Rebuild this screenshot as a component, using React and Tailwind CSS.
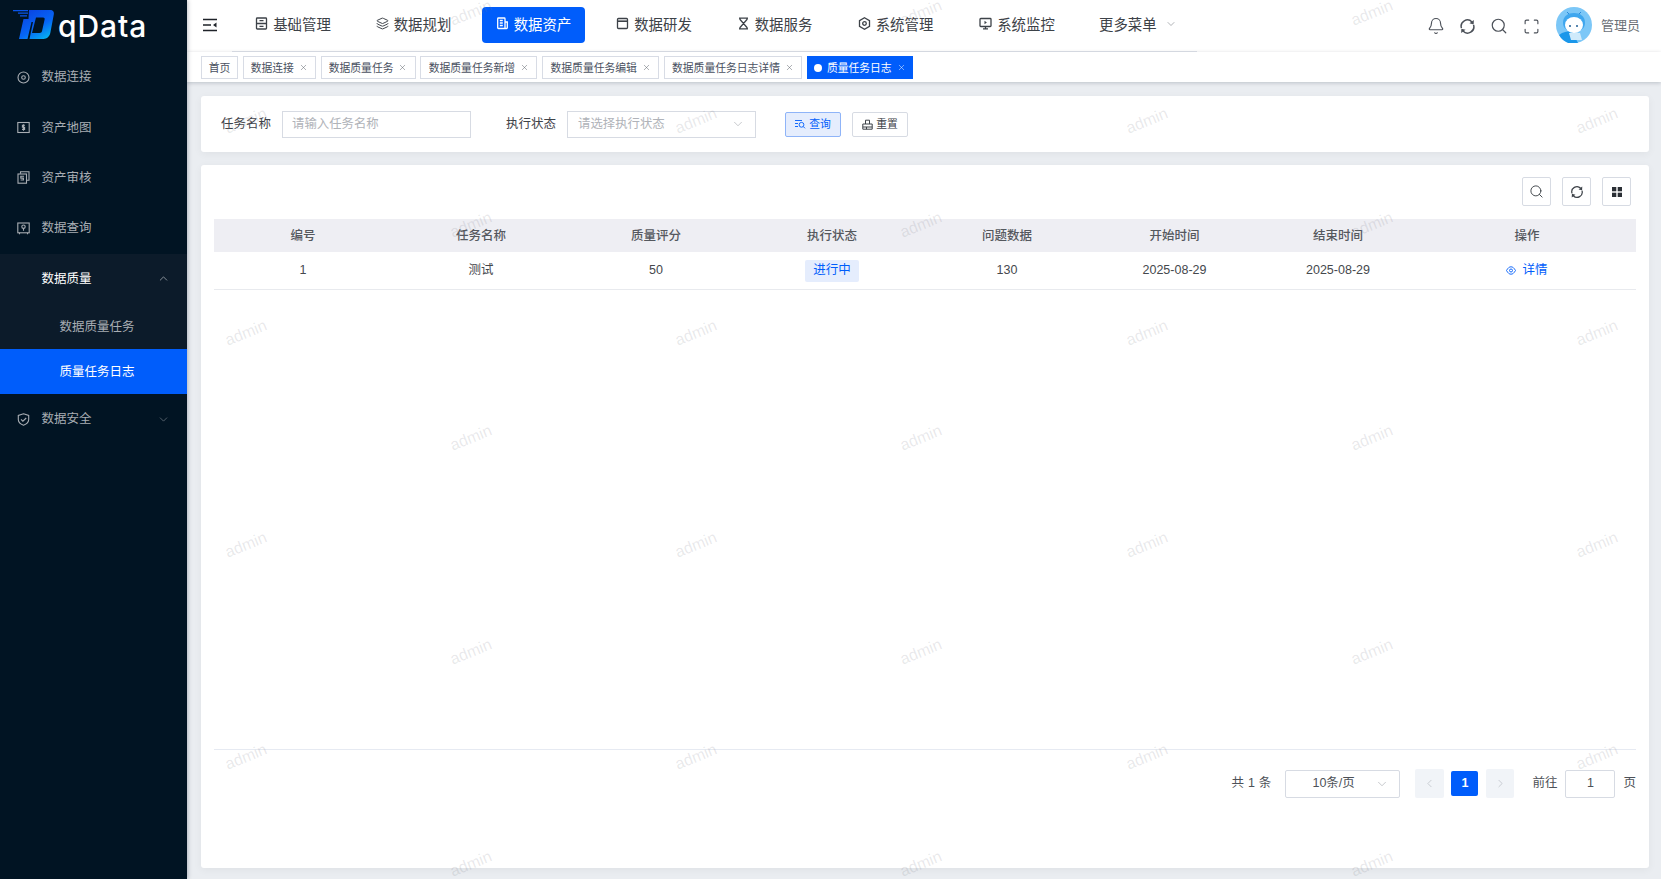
import { Bell, ChevronDown, ChevronLeft, ChevronRight, ChevronUp, Layers, Maximize, Search, X } from 'lucide-react';

const NAV_ITEMS = [
  { label: '基础管理', icon: 'base', width: 'w-[104px]' },
  { label: '数据规划', icon: 'layers', width: 'w-[103px]' },
  { label: '数据资产', icon: 'asset', width: 'w-[103px]', active: true },
  { label: '数据研发', icon: 'window', width: 'w-[104px]' },
  { label: '数据服务', icon: 'hourglass', width: 'w-[103px]' },
  { label: '系统管理', icon: 'hex', width: 'w-[105px]' },
  { label: '系统监控', icon: 'monitor', width: 'w-[104px]' },
];

const TABS = [
  { label: '首页', width: 'w-[37px]' },
  { label: '数据连接', width: 'w-[73px]', closable: true },
  { label: '数据质量任务', width: 'w-[95px]', closable: true },
  { label: '数据质量任务新增', width: 'w-[117px]', closable: true },
  { label: '数据质量任务编辑', width: 'w-[117px]', closable: true },
  { label: '数据质量任务日志详情', width: 'w-[138px]', closable: true },
];

const COLUMNS = ['编号', '任务名称', '质量评分', '执行状态', '问题数据', '开始时间', '结束时间', '操作'];
const GRID = 'grid grid-cols-[178px_178px_172px_180px_170px_165px_162px_216px]';

// rows of the repeating "admin" watermark
const WATERMARK_ROWS = [
  { top: 13, xs: [471, 921, 1372] },
  { top: 121, xs: [246, 696, 1147, 1597] },
  { top: 225, xs: [471, 921, 1372] },
  { top: 333, xs: [246, 696, 1147, 1597] },
  { top: 438, xs: [471, 921, 1372] },
  { top: 545, xs: [246, 696, 1147, 1597] },
  { top: 652, xs: [471, 921, 1372] },
  { top: 757, xs: [246, 696, 1147, 1597] },
  { top: 864, xs: [471, 921, 1372] },
];

function RefreshIcon({ size = 16 }) {
  return (
    <svg width={size} height={size} viewBox="0 0 16 16" fill="none" stroke="currentColor" strokeWidth="1.4">
      <path d="M2.300 9.500A5.900 5.900 0 0 1 12.200 3.700" />
      <path d="M13.700 6.500A5.900 5.900 0 0 1 3.800 12.300" />
      <path d="M14 1.800l-.2 4.200-4-1z" fill="currentColor" stroke="none" />
      <path d="M2 14.200l.2-4.200 4 1z" fill="currentColor" stroke="none" />
    </svg>
  );
}

function NavIcon({ name }) {
  const props = { width: 13, height: 13, viewBox: '0 0 13 13', fill: 'none', stroke: 'currentColor', strokeWidth: 1.3, className: 'mb-[3px]' };
  if (name === 'layers') return <Layers size={13} strokeWidth={1.8} className="mb-[3px]" />;
  if (name === 'base') {
    return (
      <svg {...props}>
        <rect x="1.500" y="1" width="10" height="11" rx="0.8" />
        <path d="M1.500 6.500h10M4.500 3.700h4M4.500 9.300h4" />
      </svg>
    );
  }
  if (name === 'asset') {
    return (
      <svg {...props}>
        <path d="M9 11.500H2.500a.8.8 0 0 1-.8-.8V1.800a.8.8 0 0 1 .8-.8h5.700a.8.8 0 0 1 .8.8v9.700zM9 5h2.300v5.700a.8.8 0 0 1-.8.8H9" />
        <path d="M3.800 3.500h3M3.800 6h3M3.800 8.500h3" />
      </svg>
    );
  }
  if (name === 'window') {
    return (
      <svg {...props}>
        <rect x="1.500" y="1.500" width="10" height="10" rx="1" />
        <path d="M1.500 4.200h10" strokeWidth="1.600" />
      </svg>
    );
  }
  if (name === 'hourglass') {
    return (
      <svg {...props}>
        <path d="M2 1.200h9M2 11.800h9M3 1.200v1.200l7 8.200v1.200M10 1.200v1.200l-7 8.200v1.200" />
      </svg>
    );
  }
  if (name === 'hex') {
    return (
      <svg {...props}>
        <path d="M6.500.8l5 2.850v5.700l-5 2.850-5-2.850v-5.700z" />
        <circle cx="6.500" cy="6.500" r="1.800" />
      </svg>
    );
  }
  return (
    <svg {...props}>
      <rect x="1" y="1.500" width="11" height="8" rx="0.8" />
      <path d="M4 11.800h5M6.500 9.500v2.300" />
      <path d="M5.500 3.800l2.400 1.700-2.400 1.700z" fill="currentColor" stroke="none" />
    </svg>
  );
}

function SideIcon({ name }) {
  const props = { width: 13, height: 13, viewBox: '0 0 13 13', fill: 'none', stroke: 'currentColor', strokeWidth: 1.1 };
  if (name === 'target') {
    return (
      <svg {...props}>
        <circle cx="6.500" cy="6.500" r="5.500" />
        <circle cx="6.500" cy="6.500" r="1.800" />
      </svg>
    );
  }
  if (name === 'map') {
    return (
      <svg {...props}>
        <rect x="0.800" y="1.500" width="11.400" height="10" />
        <path d="M8 4.200H5.400v2.100h2.200v2.100H5M6.500 3.200v6.600" />
      </svg>
    );
  }
  if (name === 'audit') {
    return (
      <svg {...props}>
        <path d="M3.500 2.800V.8h8.500v8.500h-2" />
        <rect x="1" y="3" width="8.500" height="9.200" />
        <path d="M7 5.200H3.800v1.900h2.600V9H3.600" />
      </svg>
    );
  }
  if (name === 'query') {
    return (
      <svg {...props}>
        <rect x="0.800" y="1" width="11.400" height="9.800" />
        <circle cx="6.500" cy="4.700" r="1.700" />
        <path d="M6.500 6.400v2.400M2.500 10.800v1.400M10.500 10.800v1.400" />
      </svg>
    );
  }
  return (
    <svg {...props}>
      <path d="M6.500.8l5.200 1.600v4.200c0 2.700-2.200 4.600-5.200 5.600-3-1-5.200-2.900-5.200-5.600V2.400z" />
      <path d="M4 6.300l1.900 1.900L9.200 5" />
    </svg>
  );
}

function Logo() {
  return (
    <div className="flex h-[52px] items-center pl-[13px]">
      <svg width="42" height="32" viewBox="0 0 42 32" className="mb-[2px]">
        <defs>
          <linearGradient id="logoBlue" x1="0.1" y1="0" x2="0.8" y2="1">
            <stop offset="0" stopColor="#0b3fe0" />
            <stop offset="0.6" stopColor="#0666f5" />
            <stop offset="1" stopColor="#06b4f2" />
          </linearGradient>
        </defs>
        <path d="M0 1h15v1.200H0zM5 3.600h10v1.200H5zM7 6.200h7v1.200H7z" fill="#0a55ea" />
        <path
          fillRule="evenodd"
          fill="url(#logoBlue)"
          d="M16 1h21c3 0 4.400 1.800 3.800 4.600l-3.400 18C36.600 27.800 34 30 30.500 30H6l4.500-20h5zM23 8.500L19 24h7.500c1.500 0 2.300-.8 2.600-2.200l2.500-11.300c.3-1.300-.2-2-1.500-2zM18.500 13L14.500 30h2L20 13z"
        />
      </svg>
      <span className="ml-[3px] font-['Inter',sans-serif] text-[30px] leading-none font-medium tracking-[0.9px] text-white">
        qData
      </span>
    </div>
  );
}

function SideItem({ icon, label, chevron, open }) {
  return (
    <div className={`flex h-[50.4px] items-center text-[12.5px] ${open ? 'text-white' : 'text-[#a8adb3]'}`}>
      <div className="flex w-[41.500px] justify-center pl-[5px]">{icon && <SideIcon name={icon} />}</div>
      <span className="flex-1 pt-[1px]">{label}</span>
      {chevron === 'up' && <ChevronUp size={13} strokeWidth={1.2} className="mr-[17px] text-[#c8ccd0]" />}
      {chevron === 'down' && <ChevronDown size={13} strokeWidth={1.2} className="mr-[17px] text-[#7f8790]" />}
    </div>
  );
}

function Sidebar() {
  return (
    <aside className="z-10 flex w-[187px] shrink-0 flex-col bg-[#011423] shadow-[1px_0_4px_rgba(0,21,41,0.25)]">
      <Logo />
      <SideItem icon="target" label="数据连接" />
      <SideItem icon="map" label="资产地图" />
      <SideItem icon="audit" label="资产审核" />
      <SideItem icon="query" label="数据查询" />
      <div className="bg-[#0c1b2a]">
        <SideItem label="数据质量" chevron="up" open />
        <div className="flex h-[45px] items-center pt-[2px] pl-[59.500px] text-[12.5px] text-[#a8adb3]">数据质量任务</div>
        <div className="flex h-[45px] items-center bg-[#005dfb] pt-[2px] pl-[59.500px] text-[12.5px] text-white">质量任务日志</div>
      </div>
      <SideItem icon="shield" label="数据安全" chevron="down" />
    </aside>
  );
}

function Header() {
  return (
    <header className="flex h-[52px] shrink-0 items-start bg-white">
      <div className="flex h-[52px] w-[45px] shrink-0 items-center pb-[2px] pl-[16px]">
        <svg width="14" height="14" viewBox="0 0 14 14" fill="none" stroke="#1f2329" strokeWidth="1.500">
          <path d="M0 1.500h14M0 7h8M0 12.500h14" />
          <path d="M13.500 4.500v5L10 7z" fill="#1f2329" stroke="none" />
        </svg>
      </div>
      <nav className="flex h-[52px] w-[965px] shrink-0 items-start gap-[17px] border-b border-[#dfe3ea] pt-[7px] pl-[9px]">
        {NAV_ITEMS.map((item) => (
          <div
            key={item.label}
            className={`flex h-[36px] items-center justify-center gap-[5px] rounded-[4px] text-[14.4px] ${item.width} ${
              item.active ? 'bg-[#005dfb] text-white' : 'text-[#3d4248]'
            }`}
          >
            <NavIcon name={item.icon} />
            <span className="pt-[2px]">{item.label}</span>
          </div>
        ))}
        <div className="flex h-[36px] items-center gap-[8px] pl-[13px] text-[14.4px] text-[#3d4248]">
          <span className="pt-[2px]">更多菜单</span>
          <ChevronDown size={12} strokeWidth={1.2} className="mb-[2px] text-[#7a7f86]" />
        </div>
      </nav>
      <div className="flex h-[52px] flex-1 items-center justify-end pr-[21px] text-[#4b5058]">
        <Bell size={18} strokeWidth={1.5} />
        <span className="ml-[14px]">
          <RefreshIcon size={17} />
        </span>
        <Search size={18} strokeWidth={1.6} className="ml-[14px]" />
        <Maximize size={17} strokeWidth={1.6} className="ml-[15px]" />
        <svg width="36" height="36" viewBox="0 0 36 36" className="mb-[2px] ml-[16px]">
          <circle cx="18" cy="18" r="18" fill="#7cc7f7" />
          <path d="M3 28c4-3 8-4 13-4l6 12H12a18 18 0 0 1-9-8z" fill="#1a97ea" />
          <path d="M13 7l-2-2M23 7l2-2" stroke="#2a88d8" strokeWidth="1" />
          <path d="M7 16c0-7 5-10 11-10s11 3 11 10c0 5-4 7-4 7H11s-4-2-4-7z" fill="#3ea6ee" />
          <ellipse cx="18" cy="18" rx="9" ry="8" fill="#fff" />
          <circle cx="14" cy="19" r="1" fill="#1f5e95" />
          <circle cx="21" cy="19" r="1" fill="#1f5e95" />
          <path d="M13 26h11l2 7H15z" fill="#cfeafb" />
        </svg>
        <span className="ml-[9px] text-[13px] text-[#6b7077]">管理员</span>
      </div>
    </header>
  );
}

function TabBar() {
  return (
    <div className="z-[1] flex h-[30px] shrink-0 gap-[4.800px] bg-white pt-[4px] pl-[14px] shadow-[0_1px_4px_rgba(0,21,41,0.2)]">
      {TABS.map((tab) => (
        <div
          key={tab.label}
          className={`flex h-[23px] items-center justify-center gap-[5px] border border-[#d8dce5] text-[10.8px] text-[#495060] ${tab.width}`}
        >
          <span className="pt-[2px]">{tab.label}</span>
          {tab.closable && <X size={9} strokeWidth={1.3} className="text-[#5a5f68]" />}
        </div>
      ))}
      <div className="flex h-[23px] w-[106px] items-center justify-center gap-[5px] bg-[#005dfb] text-[10.8px] text-white">
        <span className="h-[8px] w-[8px] rounded-full bg-white" />
        <span className="pt-[2px]">质量任务日志</span>
        <X size={9} strokeWidth={1.3} />
      </div>
    </div>
  );
}

function Chevron({ className }) {
  return <ChevronDown size={14} strokeWidth={1} className={className} />;
}

function SearchCard() {
  return (
    <div className="flex h-[56px] shrink-0 items-center rounded-[3px] bg-white pl-[20px] shadow-[0_2px_8px_rgba(0,0,0,0.05)]">
      <span className="text-[12.5px] text-[#3f4349]">任务名称</span>
      <div className="ml-[11px] flex h-[27px] w-[189px] items-center border border-[#d7dbe3] pl-[9px] text-[12.4px] text-[#b0b3b9]">
        请输入任务名称
      </div>
      <span className="ml-[35px] text-[12.5px] text-[#3f4349]">执行状态</span>
      <div className="ml-[11px] flex h-[27px] w-[189px] items-center justify-between border border-[#d7dbe3] pr-[10px] pl-[10px] text-[12.4px] text-[#b0b3b9]">
        请选择执行状态
        <Chevron className="text-[#9ea2a9]" />
      </div>
      <button
        type="button"
        className="ml-[29px] flex h-[25px] w-[56px] items-center justify-center gap-[3px] rounded-[2px] border border-[#8fb4f8] bg-[#e5edfd] text-[10.8px] text-[#005dfb]"
      >
        <svg width="11" height="10" viewBox="0 0 11 10" fill="none" stroke="currentColor" strokeWidth="0.9">
          <path d="M0 1.500h7M0 4.500h3M0 7.500h3" />
          <circle cx="6.500" cy="5.800" r="2.400" />
          <path d="M8.300 7.600l1.700 1.700" />
        </svg>
        查询
      </button>
      <button
        type="button"
        className="ml-[11px] flex h-[25px] w-[56px] items-center justify-center gap-[3px] rounded-[2px] border border-[#d7dbe3] bg-white text-[10.8px] text-[#3d4248]"
      >
        <svg width="11" height="11" viewBox="0 0 11 11" fill="none" stroke="currentColor" strokeWidth="1">
          <path d="M.8 10.200V5h9.400v5.200zM3.500 5V1.200h4V5M.8 8h9.400M4.500 8v2.200" />
        </svg>
        重置
      </button>
    </div>
  );
}

function ToolButton({ children }) {
  return (
    <button type="button" className="flex h-[29px] w-[29px] items-center justify-center rounded-[2px] border border-[#d7dbe3] text-[#3d4248]">
      {children}
    </button>
  );
}

function Pagination() {
  return (
    <div className="mt-[19px] flex h-[29px] items-center justify-end text-[12.5px] text-[#4d5157]">
      <span className="tracking-[0.2px]">共 1 条</span>
      <div className="ml-[14px] flex h-[28px] w-[115px] items-center justify-between rounded-[2px] border border-[#d7dbe3] pr-[10px] pl-[26px] text-[#4d5157]">
        10条/页
        <Chevron className="text-[#9ea2a9]" />
      </div>
      <button type="button" className="ml-[15px] flex h-[29px] w-[29px] items-center justify-center rounded-[2px] bg-[#f1f4f8] text-[#b3b8bf]">
        <ChevronLeft size={13} strokeWidth={1.2} />
      </button>
      <button type="button" className="ml-[7px] flex h-[25px] w-[27px] items-center justify-center rounded-[2px] bg-[#005dfb] font-bold text-white">
        1
      </button>
      <button type="button" className="ml-[8px] flex h-[29px] w-[28px] items-center justify-center rounded-[2px] bg-[#f1f4f8] text-[#b3b8bf]">
        <ChevronRight size={13} strokeWidth={1.2} />
      </button>
      <span className="ml-[18px]">前往</span>
      <div className="ml-[8px] flex h-[28px] w-[50px] items-center justify-center rounded-[2px] border border-[#d7dbe3]">1</div>
      <span className="ml-[8px]">页</span>
    </div>
  );
}

function TableCard() {
  return (
    <div className="flex min-h-0 flex-1 flex-col rounded-[3px] bg-white px-[13px] pt-[12px] pb-[70px] shadow-[0_2px_8px_rgba(0,0,0,0.05)]">
      <div className="flex justify-end gap-[11px] pr-[5px]">
        <ToolButton>
          <Search size={15} strokeWidth={1.5} />
        </ToolButton>
        <ToolButton>
          <RefreshIcon size={14} />
        </ToolButton>
        <ToolButton>
          <svg width="10" height="10" viewBox="0 0 10 10" fill="#2b2f35">
            <rect width="4.300" height="4.300" />
            <rect x="5.700" width="4.300" height="4.300" />
            <rect y="5.700" width="4.300" height="4.300" />
            <rect x="5.700" y="5.700" width="4.300" height="4.300" />
          </svg>
        </ToolButton>
      </div>
      <div className="mt-[13px] min-h-0 flex-1 border-b border-[#e6eaf2]">
        <div className={`${GRID} h-[33px] items-center bg-[#eeeef3] pt-[2px] text-center text-[12.5px] font-medium text-[#55585e]`}>
          {COLUMNS.map((col) => (
            <div key={col}>{col}</div>
          ))}
        </div>
        <div className={`${GRID} h-[38px] items-center border-b border-[#e8eaee] text-center text-[12.5px] text-[#45484d]`}>
          <div>1</div>
          <div>测试</div>
          <div>50</div>
          <div className="flex justify-center">
            <span className="flex h-[22px] w-[54px] items-center justify-center rounded-[2px] bg-[#e5edfd] text-[#005dfb]">进行中</span>
          </div>
          <div>130</div>
          <div>2025-08-29</div>
          <div>2025-08-29</div>
          <div className="flex items-center justify-center gap-[6px] text-[#005dfb]">
            <svg width="10" height="9" viewBox="0 0 10 9" fill="none" stroke="currentColor" strokeWidth="0.9">
              <path d="M.5 4.500C2 1.800 3.400.8 5 .8s3 1 4.500 3.700C8 7.200 6.600 8.200 5 8.200S2 7.200.5 4.500z" />
              <circle cx="5" cy="4.500" r="1.500" />
            </svg>
            详情
          </div>
        </div>
      </div>
      <Pagination />
    </div>
  );
}

function Watermarks() {
  return (
    <div className="pointer-events-none absolute inset-0 z-20 overflow-hidden">
      {WATERMARK_ROWS.flatMap((row) =>
        row.xs.map((x) => (
          <span
            key={`${row.top}-${x}`}
            className="absolute -translate-x-1/2 -translate-y-1/2 -rotate-[22deg] font-['Liberation_Sans',sans-serif] text-[16px] whitespace-nowrap text-[rgba(120,120,130,0.17)]"
            style={{ left: x, top: row.top }}
          >
            admin
          </span>
        )),
      )}
    </div>
  );
}

export default function App() {
  return (
    <div className="relative flex h-screen w-full overflow-hidden bg-[#eaedf1] font-['Liberation_Sans','Noto_Sans_CJK_SC',sans-serif]">
      <Sidebar />
      <main className="flex min-w-0 flex-1 flex-col">
        <Header />
        <TabBar />
        <div className="flex min-h-0 flex-1 flex-col gap-[13px] pt-[14px] pr-[12px] pb-[11px] pl-[14px]">
          <SearchCard />
          <TableCard />
        </div>
      </main>
      <Watermarks />
    </div>
  );
}
